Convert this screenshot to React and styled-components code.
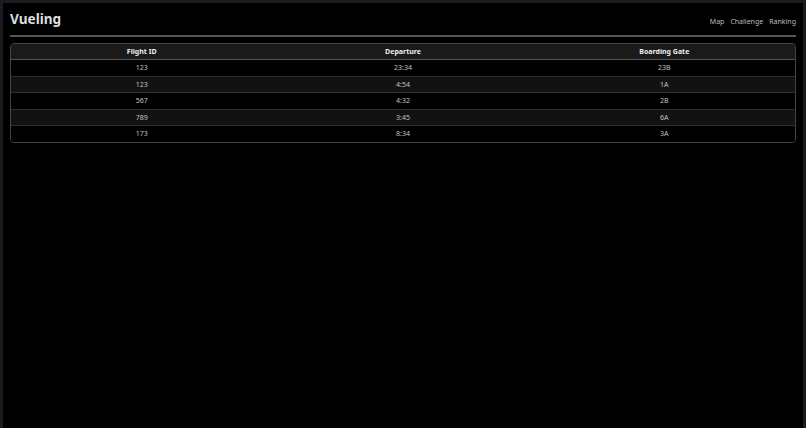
import React from 'react'
import styled, { createGlobalStyle } from 'styled-components';

const GlobalStyle = createGlobalStyle`
  html, body {
    margin: 0;
    padding: 0;
    background: #000;
    height: 100%;
  }
  body {
    font-family: "Noto Sans", "Open Sans", sans-serif;
    color: #ddd;
  }
  #root {
    height: 100%;
  }
`;

const Frame = styled.div`
  box-sizing: border-box;
  min-height: 100%;
  border: 3px solid #1c1b22;
  border-bottom: none;
  background: #000;
  padding: 6px 7px 0 7px;
`;

const Header = styled.header`
  display: flex;
  justify-content: space-between;
  align-items: flex-end;
  border-bottom: 2px solid #555;
  padding-bottom: 6px;
`;

const Title = styled.h1`
  margin: 0;
  font-size: 13.6px;
  font-weight: 700;
  color: #ddd;
  line-height: 20px;
`;

const Nav = styled.nav`
  display: flex;
  gap: 6px;
  padding-bottom: 3px;
`;

const NavLink = styled.a`
  font-size: 7px;
  color: #bbb;
  text-decoration: none;
`;

const TableWrap = styled.div`
  margin-top: 6px;
  border: 1px solid #444;
  border-radius: 4px;
  overflow: hidden;
`;

const Table = styled.table`
  width: 100%;
  border-collapse: collapse;
  table-layout: fixed;
  font-size: 7px;
`;

const Th = styled.th`
  background: #1a1a1a;
  color: #eee;
  font-weight: 700;
  height: 15px;
  padding: 0;
  border-bottom: 1px solid #555;
`;

const Row = styled.tr`
  background: ${({ $striped }) => ($striped ? '#121212' : '#000')};
  & td {
    border-top: ${({ $first }) => ($first ? 'none' : '1px solid #2e2e2e')};
  }
`;

const Td = styled.td`
  text-align: center;
  color: #c4c4c4;
  height: 15.5px;
  padding: 0;
`;

const flights = [
  { id: '123', departure: '23:34', gate: '23B' },
  { id: '123', departure: '4:54', gate: '1A' },
  { id: '567', departure: '4:32', gate: '2B' },
  { id: '789', departure: '3:45', gate: '6A' },
  { id: '173', departure: '8:34', gate: '3A' },
];

const App = () => {
  return (
    <>
      <GlobalStyle />
      <Frame>
        <Header>
          <Title>Vueling</Title>
          <Nav>
            <NavLink>Map</NavLink>
            <NavLink>Challenge</NavLink>
            <NavLink>Ranking</NavLink>
          </Nav>
        </Header>
        <TableWrap>
          <Table>
            <thead>
              <tr>
                <Th>Flight ID</Th>
                <Th>Departure</Th>
                <Th>Boarding Gate</Th>
              </tr>
            </thead>
            <tbody>
              {flights.map((f, index) => (
                <Row key={index} $striped={index % 2 === 1} $first={index === 0}>
                  <Td>{f.id}</Td>
                  <Td>{f.departure}</Td>
                  <Td>{f.gate}</Td>
                </Row>
              ))}
            </tbody>
          </Table>
        </TableWrap>
      </Frame>
    </>
  )
};

export default App;
